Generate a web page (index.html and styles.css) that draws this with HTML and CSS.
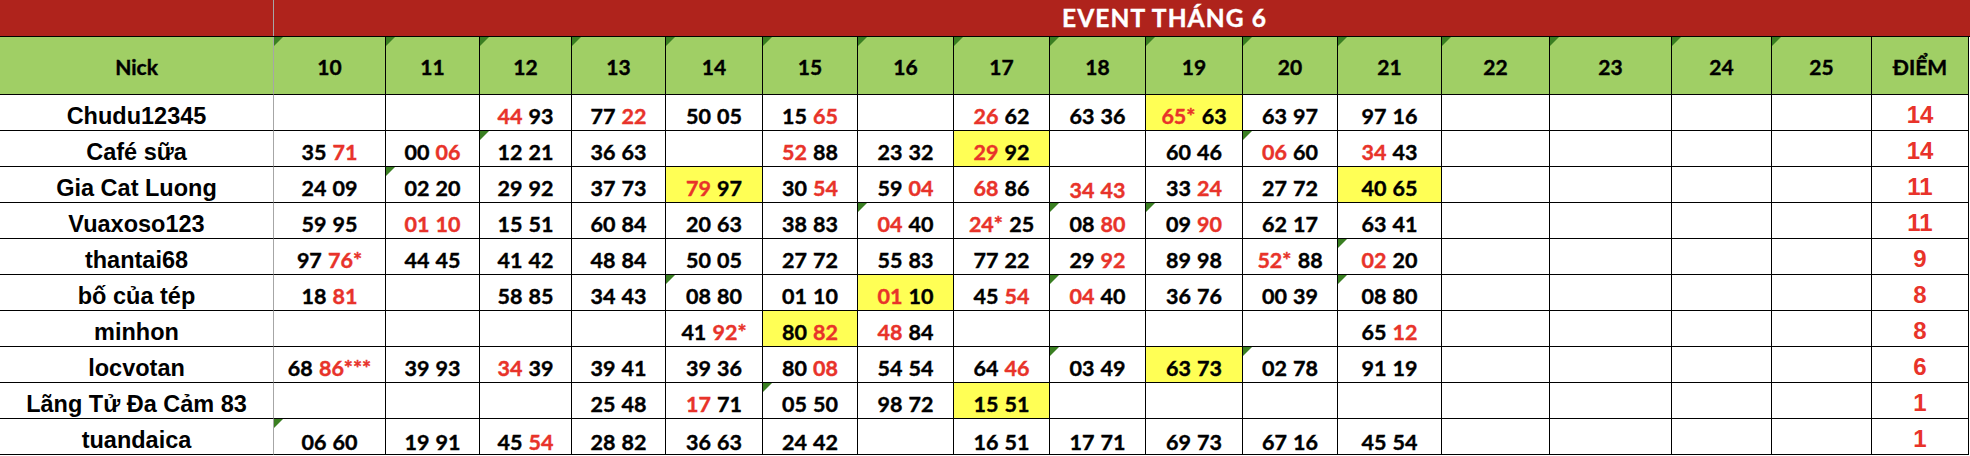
FILE: index.html
```html
<!DOCTYPE html>
<html lang="vi">
<head>
<meta charset="utf-8">
<title>EVENT THÁNG 6</title>
<link rel="stylesheet" href="styles.css">
</head>
<body>
<div class="banner">
  <div class="banner-nick"></div>
  <div class="banner-title">EVENT THÁNG 6</div>
</div>
<div class="sheet">
  <div class="h hn">Nick</div>
  <div class="h t">10</div><div class="h t">11</div><div class="h t">12</div><div class="h t">13</div><div class="h t">14</div><div class="h t">15</div><div class="h t">16</div><div class="h t">17</div><div class="h t">18</div><div class="h t">19</div><div class="h t">20</div><div class="h t">21</div><div class="h t">22</div><div class="h t">23</div><div class="h t">24</div><div class="h t">25</div><div class="h">ĐIỂM</div>

  <div class="n">Chudu12345</div>
  <div class="d"></div><div class="d"></div><div class="d"><span class="r">44</span> 93</div><div class="d">77 <span class="r">22</span></div><div class="d">50 05</div><div class="d">15 <span class="r">65</span></div><div class="d"></div><div class="d"><span class="r">26</span> 62</div><div class="d">63 36</div><div class="d y"><span class="r">65*</span> 63</div><div class="d">63 97</div><div class="d">97 16</div>
  <div class="d"></div><div class="d"></div><div class="d"></div><div class="d"></div><div class="s">14</div>

  <div class="n">Café sữa</div>
  <div class="d">35 <span class="r">71</span></div><div class="d">00 <span class="r">06</span></div><div class="d t">12 21</div><div class="d">36 63</div><div class="d"></div><div class="d"><span class="r">52</span> 88</div><div class="d">23 32</div><div class="d y"><span class="r">29</span> 92</div><div class="d"></div><div class="d">60 46</div><div class="d t"><span class="r">06</span> 60</div><div class="d"><span class="r">34</span> 43</div>
  <div class="d"></div><div class="d"></div><div class="d"></div><div class="d"></div><div class="s">14</div>

  <div class="n">Gia Cat Luong</div>
  <div class="d">24 09</div><div class="d t">02 20</div><div class="d">29 92</div><div class="d">37 73</div><div class="d y"><span class="r">79</span> 97</div><div class="d">30 <span class="r">54</span></div><div class="d">59 <span class="r">04</span></div><div class="d"><span class="r">68</span> 86</div><div class="d low"><span class="r">34 43</span></div><div class="d">33 <span class="r">24</span></div><div class="d">27 72</div><div class="d y">40 65</div>
  <div class="d"></div><div class="d"></div><div class="d"></div><div class="d"></div><div class="s">11</div>

  <div class="n">Vuaxoso123</div>
  <div class="d">59 95</div><div class="d"><span class="r">01 10</span></div><div class="d">15 51</div><div class="d">60 84</div><div class="d">20 63</div><div class="d">38 83</div><div class="d t"><span class="r">04</span> 40</div><div class="d"><span class="r">24*</span> 25</div><div class="d t">08 <span class="r">80</span></div><div class="d t">09 <span class="r">90</span></div><div class="d">62 17</div><div class="d">63 41</div>
  <div class="d"></div><div class="d"></div><div class="d"></div><div class="d"></div><div class="s">11</div>

  <div class="n">thantai68</div>
  <div class="d">97 <span class="r">76*</span></div><div class="d">44 45</div><div class="d">41 42</div><div class="d">48 84</div><div class="d">50 05</div><div class="d">27 72</div><div class="d">55 83</div><div class="d">77 22</div><div class="d">29 <span class="r">92</span></div><div class="d">89 98</div><div class="d"><span class="r">52*</span> 88</div><div class="d t"><span class="r">02</span> 20</div>
  <div class="d"></div><div class="d"></div><div class="d"></div><div class="d"></div><div class="s">9</div>

  <div class="n">bố của tép</div>
  <div class="d">18 <span class="r">81</span></div><div class="d"></div><div class="d">58 85</div><div class="d">34 43</div><div class="d t">08 80</div><div class="d">01 10</div><div class="d y"><span class="r">01</span> 10</div><div class="d">45 <span class="r">54</span></div><div class="d t"><span class="r">04</span> 40</div><div class="d">36 76</div><div class="d">00 39</div><div class="d t">08 80</div>
  <div class="d"></div><div class="d"></div><div class="d"></div><div class="d"></div><div class="s">8</div>

  <div class="n">minhon</div>
  <div class="d"></div><div class="d"></div><div class="d"></div><div class="d"></div><div class="d">41 <span class="r">92*</span></div><div class="d y">80 <span class="r">82</span></div><div class="d"><span class="r">48</span> 84</div><div class="d"></div><div class="d"></div><div class="d"></div><div class="d"></div><div class="d">65 <span class="r">12</span></div>
  <div class="d"></div><div class="d"></div><div class="d"></div><div class="d"></div><div class="s">8</div>

  <div class="n">locvotan</div>
  <div class="d">68 <span class="r">86***</span></div><div class="d">39 93</div><div class="d"><span class="r">34</span> 39</div><div class="d">39 41</div><div class="d">39 36</div><div class="d">80 <span class="r">08</span></div><div class="d">54 54</div><div class="d">64 <span class="r">46</span></div><div class="d t">03 49</div><div class="d y">63 73</div><div class="d t">02 78</div><div class="d">91 19</div>
  <div class="d"></div><div class="d"></div><div class="d"></div><div class="d"></div><div class="s">6</div>

  <div class="n">Lãng Tử Đa Cảm 83</div>
  <div class="d"></div><div class="d"></div><div class="d"></div><div class="d">25 48</div><div class="d"><span class="r">17</span> 71</div><div class="d t">05 50</div><div class="d">98 72</div><div class="d y">15 51</div><div class="d"></div><div class="d"></div><div class="d"></div><div class="d"></div>
  <div class="d"></div><div class="d"></div><div class="d"></div><div class="d"></div><div class="s">1</div>

  <div class="n">tuandaica</div>
  <div class="d t low">06 60</div><div class="d low">19 91</div><div class="d low">45 <span class="r">54</span></div><div class="d low">28 82</div><div class="d low">36 63</div><div class="d low">24 42</div><div class="d"></div><div class="d low">16 51</div><div class="d low">17 71</div><div class="d low">69 73</div><div class="d low">67 16</div><div class="d low">45 54</div>
  <div class="d"></div><div class="d"></div><div class="d"></div><div class="d"></div><div class="s">1</div>
</div>
</body>
</html>
```

FILE: styles.css
```css
html, body {
  margin: 0;
  padding: 0;
  background: #ffffff;
}

body {
  width: 1970px;
  height: 456px;
  overflow: hidden;
  font-family: Lato, "Liberation Sans", sans-serif;
  color: #000000;
}

.banner {
  display: flex;
  height: 36px;
  background: #af231c;
  border-bottom: 1px solid #000000;
}

.banner-nick {
  width: 273px;
  flex: none;
  border-right: 1px solid #a6a6a6;
}

.banner-title {
  flex: 1;
  padding-left: 788px;
  color: #ffffff;
  font-family: Lato, sans-serif;
  font-weight: 700;
  font-size: 24.5px;
  letter-spacing: 1.1px;
  line-height: 36px;
  white-space: nowrap;
  -webkit-text-stroke: 0.4px #ffffff;
}

.sheet {
  display: grid;
  grid-template-columns: 274px 112px 94px 92px 94px 97px 95px 96px 96px 96px 97px 95px 104px 108px 122px 100px 100px 97px;
  grid-template-rows: 58px;
  grid-auto-rows: 36px;
}

.sheet > div {
  box-sizing: border-box;
  position: relative;
  display: flex;
  align-items: center;
  justify-content: center;
  border-right: 1px solid #000000;
  border-bottom: 1px solid #000000;
  white-space: pre;
}

.h {
  background: #a0cf65;
  font-family: Lato, sans-serif;
  font-weight: 700;
  font-size: 21px;
  line-height: 24px;
  padding-top: 2px;
  -webkit-text-stroke: 0.4px #000000;
}

.sheet > .h.hn,
.sheet > .n {
  border-right-color: #a6a6a6;
}

.n {
  font-family: "Liberation Sans", Arial, sans-serif;
  font-weight: 700;
  font-size: 23.5px;
  line-height: 27px;
  padding-top: 7px;
}

.d {
  font-family: Lato, sans-serif;
  font-weight: 700;
  font-size: 21.5px;
  line-height: 24px;
  word-spacing: 1px;
  padding-top: 7px;
  -webkit-text-stroke: 0.4px currentColor;
}

.d.low {
  padding-top: 11px;
}

.s {
  font-family: "Liberation Sans", Arial, sans-serif;
  font-weight: 700;
  font-size: 24px;
  line-height: 27px;
  padding-top: 4px;
  color: #e8332a;
}

.r {
  color: #e8332a;
  -webkit-text-stroke: 0.4px #e8332a;
}

.y {
  background: #ffff55;
}

.t::before {
  content: "";
  position: absolute;
  top: 0;
  left: 0;
  width: 0;
  height: 0;
  border-top: 9px solid #3a7f22;
  border-right: 9px solid transparent;
}
```
